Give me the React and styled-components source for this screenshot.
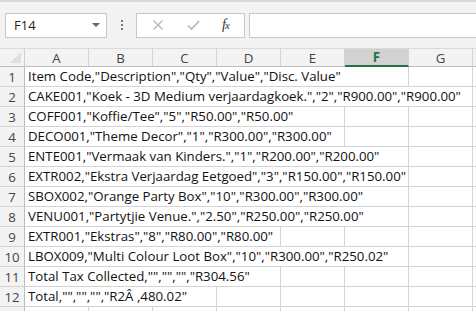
import styled, { createGlobalStyle } from "styled-components";

const GlobalStyle = createGlobalStyle`
  html, body {
    margin: 0;
    padding: 0;
    background: #ffffff;
    overflow: hidden;
  }
  body {
    font-family: "Open Sans", "Liberation Sans", sans-serif;
  }
`;

const Window = styled.div`
  width: 476px;
  height: 311px;
  overflow: hidden;
  background: #ffffff;
`;

const FormulaBar = styled.div`
  display: flex;
  align-items: center;
  height: 48px;
  padding-left: 5px;
  box-sizing: border-box;
  background: #f3f3f3;
  border-top: 2px solid #dadada;
`;

const NameBox = styled.div`
  display: flex;
  align-items: center;
  justify-content: space-between;
  width: 102px;
  height: 25px;
  box-sizing: border-box;
  padding: 0 6px 0 8px;
  background: #ffffff;
  border: 1px solid #c6c6c6;
  font-size: 13px;
  color: #222;
`;

const Caret = styled.span`
  width: 0;
  height: 0;
  border-left: 4px solid transparent;
  border-right: 4px solid transparent;
  border-top: 4px solid #666;
`;

const Dots = styled.div`
  display: flex;
  flex-direction: column;
  gap: 2px;
  margin: 0 13px 0 14px;
  span {
    width: 2px;
    height: 2px;
    background: #777;
  }
`;

const IconBox = styled.div`
  display: flex;
  align-items: center;
  justify-content: space-around;
  width: 109px;
  height: 25px;
  box-sizing: border-box;
  padding: 0 4px;
  background: #ffffff;
  border: 1px solid #c6c6c6;
`;

const Fx = styled.span`
  font-family: "Liberation Serif", serif;
  font-style: italic;
  font-size: 14px;
  color: #333;
  letter-spacing: -1px;
  small {
    font-size: 11px;
  }
`;

const FormulaInput = styled.div`
  flex: 1;
  height: 25px;
  margin-left: 4px;
  box-sizing: border-box;
  background: #ffffff;
  border: 1px solid #c6c6c6;
  border-right: none;
`;

const Sheet = styled.div`
  display: grid;
  grid-template-columns: 25px repeat(7, 64px) 1fr;
  grid-auto-rows: 20px;
  grid-template-rows: 19px;
  font-size: 13.25px;
  color: #111;
`;

const Corner = styled.div`
  position: relative;
  background: #f3f3f3;
  border-right: 1px solid #cfcfcf;
  border-bottom: 1px solid #bdbdbd;
  border-top: 1px solid #dadada;
  &::after {
    content: "";
    position: absolute;
    right: 3px;
    bottom: 3px;
    border-left: 11px solid transparent;
    border-bottom: 11px solid #dfdfdf;
  }
`;

const ColHead = styled.div`
  display: flex;
  align-items: center;
  justify-content: center;
  background: ${(p) => (p.$active ? "#d2d2d2" : "#f3f3f3")};
  color: ${(p) => (p.$active ? "#217346" : "#444")};
  font-weight: ${(p) => (p.$active ? 700 : 400)};
  border-top: 1px solid #dadada;
  border-right: 1px solid #d4d4d4;
  border-bottom: ${(p) => (p.$active ? "2px solid #217346" : "1px solid #bdbdbd")};
`;

const RowHead = styled.div`
  display: flex;
  align-items: center;
  justify-content: center;
  background: #f3f3f3;
  color: #444;
  border-right: 1px solid #bdbdbd;
  border-bottom: 1px solid #d4d4d4;
`;

const Cell = styled.div`
  grid-column: span ${(p) => p.$span || 1};
  display: flex;
  align-items: flex-end;
  padding: 0 0 1px 3px;
  box-sizing: border-box;
  white-space: nowrap;
  overflow: visible;
  border-right: 1px solid #d4d4d4;
  border-bottom: 1px solid #d4d4d4;
`;

const cols = ["A", "B", "C", "D", "E", "F", "G", ""];

const rows = [
  ['Item Code,"Description","Qty","Value","Disc. Value"', 6],
  ['CAKE001,"Koek - 3D Medium verjaardagkoek.","2","R900.00","R900.00"', 7],
  ['COFF001,"Koffie/Tee","5","R50.00","R50.00"', 5],
  ['DECO001,"Theme Decor","1","R300.00","R300.00"', 5],
  ['ENTE001,"Vermaak van Kinders.","1","R200.00","R200.00"', 6],
  ['EXTR002,"Ekstra Verjaardag Eetgoed","3","R150.00","R150.00"', 6],
  ['SBOX002,"Orange Party Box","10","R300.00","R300.00"', 6],
  ['VENU001,"Partytjie Venue.","2.50","R250.00","R250.00"', 6],
  ['EXTR001,"Ekstras","8","R80.00","R80.00"', 4],
  ['LBOX009,"Multi Colour Loot Box","10","R300.00","R250.02"', 6],
  ['Total Tax Collected,"","","","R304.56"', 4],
  ['Total,"","","","R2Â ,480.02"', 3],
  ["", 1],
];

export default function App() {
  return (
    <Window>
      <GlobalStyle />
      <FormulaBar>
        <NameBox>
          F14
          <Caret />
        </NameBox>
        <Dots>
          <span />
          <span />
          <span />
        </Dots>
        <IconBox>
          <svg width="12" height="12" viewBox="0 0 12 12">
            <path d="M1.5 1.5 L10.5 10.5 M10.5 1.5 L1.5 10.5" stroke="#b5b5b5" strokeWidth="1.3" fill="none" />
          </svg>
          <svg width="13" height="12" viewBox="0 0 13 12">
            <path d="M1 6.5 L4.5 10 L12 2" stroke="#b5b5b5" strokeWidth="1.6" fill="none" />
          </svg>
          <Fx>
            f<small>x</small>
          </Fx>
        </IconBox>
        <FormulaInput />
      </FormulaBar>
      <Sheet>
        <Corner />
        {cols.map((c, i) => (
          <ColHead key={i} $active={c === "F"}>
            {c}
          </ColHead>
        ))}
        {rows.map(([text, span], r) => {
          const rest = 8 - span;
          return [
            <RowHead key={`h${r}`}>{text ? r + 1 : ""}</RowHead>,
            <Cell key={`c${r}`} $span={span}>
              {text}
            </Cell>,
            ...Array.from({ length: rest }, (_, k) => <Cell key={`e${r}-${k}`} />),
          ];
        })}
      </Sheet>
    </Window>
  );
}
